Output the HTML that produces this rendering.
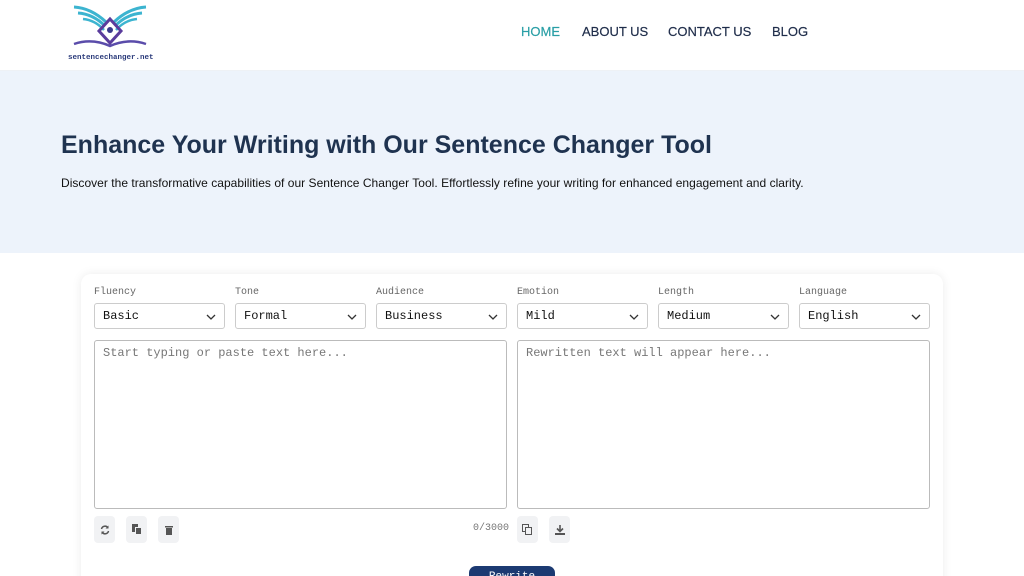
<!DOCTYPE html>
<html><head><meta charset="utf-8"><style>
*{box-sizing:border-box;margin:0;padding:0}
html,body{width:1024px;height:576px;overflow:hidden}
body{background:#fff;font-family:"Liberation Sans",sans-serif;position:relative}
.hdr{position:absolute;top:0;left:0;width:1024px;height:71px;background:#fff;border-bottom:1px solid #eef1f5}
.nav a{position:absolute;top:24px;font-size:13px;font-weight:500;color:#1f2d4a;text-decoration:none;-webkit-text-stroke:.2px}
.hero{position:absolute;top:71px;left:0;width:1024px;height:182px;background:#edf3fb}
h1{position:absolute;left:61px;top:131px;font-size:25px;font-weight:700;color:#1f3350;letter-spacing:0;white-space:nowrap}
.sub{position:absolute;left:61px;top:176px;font-size:12px;color:#111;letter-spacing:.03px;white-space:nowrap}
.card{position:absolute;left:81px;top:274px;width:862px;height:330px;background:#fff;border-radius:10px;box-shadow:0 0 10px rgba(0,0,0,.08)}
.lbl{position:absolute;top:287px;font:10px "Liberation Mono",monospace;color:#666}
.sel{position:absolute;top:303px;width:131px;height:26px;border:1px solid #ccc;border-radius:3px;font:12px "Liberation Mono",monospace;color:#111;padding:5px 8px}
.sel svg{position:absolute;right:8px;top:9px}
.ta{position:absolute;top:340px;width:413px;height:169px;border:1px solid #bbb;border-radius:3px;font:12px "Liberation Mono",monospace;color:#777;padding:5px 8px}
.b{position:absolute;top:516px;width:21px;height:27px;background:#f1f2f4;border-radius:4px;display:flex;align-items:center;justify-content:center}
.cnt{position:absolute;top:523px;left:473px;font:10px "Liberation Mono",monospace;color:#777}
.rw{position:absolute;left:469px;top:566px;width:86px;height:24px;background:#1c3a72;border-radius:7px;color:#fff;font:11px "Liberation Mono",monospace;text-align:center;padding-top:5px}
</style></head><body>
<div class="hdr">
<svg style="position:absolute;left:66px;top:2px" width="88" height="60" viewBox="0 0 88 60">
<path d="M8 5 Q25 6 40 20" stroke="#3cb4d0" stroke-width="3" fill="none"/>
<path d="M12 11 Q27 12 39 24" stroke="#3cb4d0" stroke-width="3" fill="none"/>
<path d="M17 17 Q29 18 38 28" stroke="#3cb4d0" stroke-width="2.5" fill="none"/>
<path d="M80 5 Q63 6 48 20" stroke="#3cb4d0" stroke-width="3" fill="none"/>
<path d="M76 11 Q61 12 49 24" stroke="#3cb4d0" stroke-width="3" fill="none"/>
<path d="M71 17 Q59 18 50 28" stroke="#3cb4d0" stroke-width="2.5" fill="none"/>
<path d="M44 17 L55 29 L44 41 L33 29 Z" stroke="#5a3c9c" stroke-width="3" fill="none"/>
<circle cx="44" cy="28" r="3" fill="#3a3a8c"/>
<path d="M8 42 Q26 36 44 44 Q62 36 80 42" stroke="#5a4caa" stroke-width="2.5" fill="none"/>
<text x="2" y="57" font-family="Liberation Mono" font-size="7.5" fill="#2a3a7a" font-weight="bold">sentencechanger.net</text>
</svg>
<div class="nav"><a style="left:521px;color:#2a9fa6">HOME</a><a style="left:582px">ABOUT US</a><a style="left:668px">CONTACT US</a><a style="left:772px">BLOG</a></div>
</div>
<div class="hero"></div>
<h1>Enhance Your Writing with Our Sentence Changer Tool</h1>
<div class="sub">Discover the transformative capabilities of our Sentence Changer Tool. Effortlessly refine your writing for enhanced engagement and clarity.</div>
<div class="card"></div>
<div class="lbl" style="left:94px">Fluency</div><div class="lbl" style="left:235px">Tone</div><div class="lbl" style="left:376px">Audience</div><div class="lbl" style="left:517px">Emotion</div><div class="lbl" style="left:658px">Length</div><div class="lbl" style="left:799px">Language</div>
<div class="sel" style="left:94px">Basic<svg width="10" height="8"><path d="M1 2 L5 6 L9 2" stroke="#333" stroke-width="1.3" fill="none"/></svg></div>
<div class="sel" style="left:235px">Formal<svg width="10" height="8"><path d="M1 2 L5 6 L9 2" stroke="#333" stroke-width="1.3" fill="none"/></svg></div>
<div class="sel" style="left:376px">Business<svg width="10" height="8"><path d="M1 2 L5 6 L9 2" stroke="#333" stroke-width="1.3" fill="none"/></svg></div>
<div class="sel" style="left:517px">Mild<svg width="10" height="8"><path d="M1 2 L5 6 L9 2" stroke="#333" stroke-width="1.3" fill="none"/></svg></div>
<div class="sel" style="left:658px">Medium<svg width="10" height="8"><path d="M1 2 L5 6 L9 2" stroke="#333" stroke-width="1.3" fill="none"/></svg></div>
<div class="sel" style="left:799px">English<svg width="10" height="8"><path d="M1 2 L5 6 L9 2" stroke="#333" stroke-width="1.3" fill="none"/></svg></div>
<div class="ta" style="left:94px">Start typing or paste text here...</div>
<div class="ta" style="left:517px">Rewritten text will appear here...</div>
<div class="b" style="left:94px"><svg width="10" height="10" viewBox="0 0 10 10"><path d="M1.5 4 A3.5 3.5 0 0 1 8 3 M8.5 6 A3.5 3.5 0 0 1 2 7" stroke="#555" stroke-width="1.5" fill="none"/><path d="M8.5 0.5 V3.5 H5.5 Z M1.5 9.5 V6.5 H4.5Z" fill="#555"/></svg></div>
<div class="b" style="left:126px"><svg width="10" height="11"><rect x="0" y="0" width="6" height="8" fill="#555"/><rect x="3.5" y="3.5" width="6" height="7" fill="#555" stroke="#f1f2f4"/></svg></div>
<div class="b" style="left:158px"><svg width="8" height="10"><rect x="0" y="1" width="8" height="1.5" fill="#555"/><rect x="1" y="3" width="6" height="7" fill="#555"/></svg></div>
<div class="cnt">0/3000</div>
<div class="b" style="left:517px"><svg width="11" height="11"><rect x="0.5" y="0.5" width="6" height="7" fill="none" stroke="#555"/><rect x="3.5" y="3.5" width="6" height="7" fill="#f1f2f4" stroke="#555"/></svg></div>
<div class="b" style="left:549px"><svg width="10" height="10"><path d="M5 0 V6 M2 3.5 L5 6.5 L8 3.5" stroke="#555" stroke-width="1.6" fill="none"/><rect x="0" y="8" width="10" height="2" fill="#555"/></svg></div>
<div class="rw">Rewrite</div>
</body></html>
